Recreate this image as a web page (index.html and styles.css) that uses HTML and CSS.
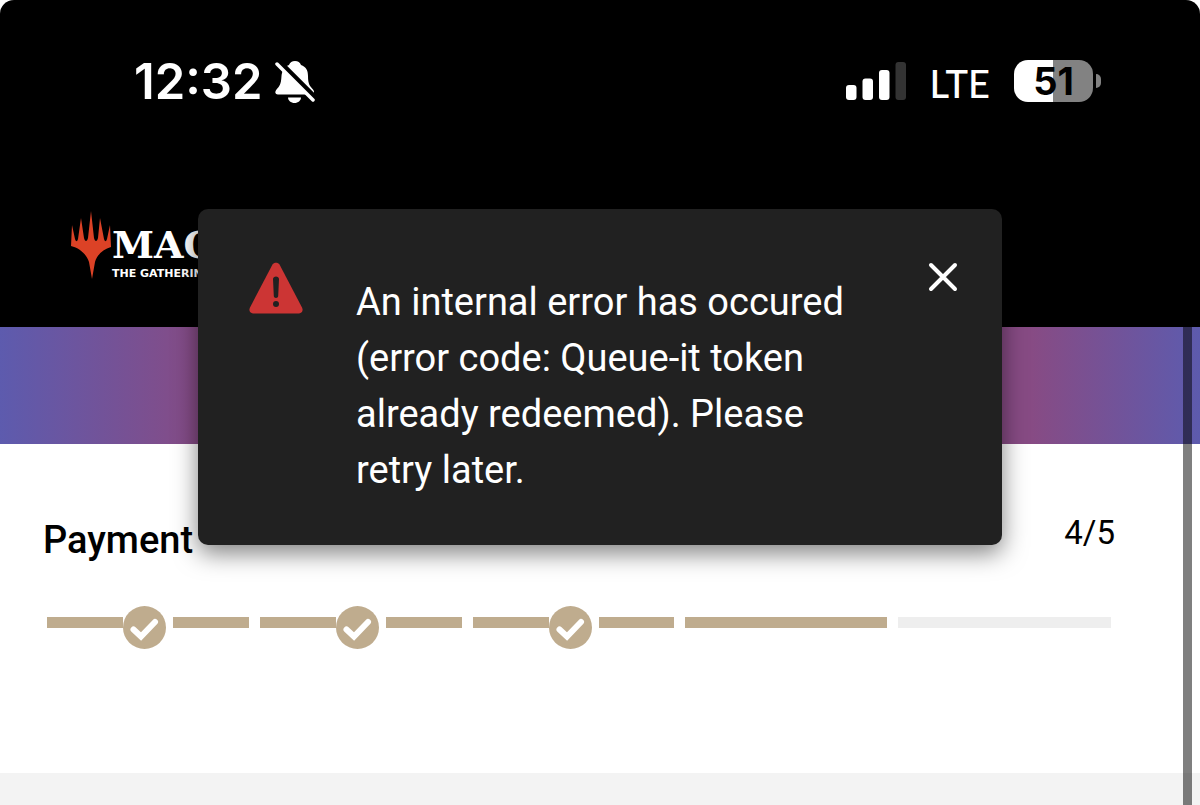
FILE: index.html
```
<!DOCTYPE html>
<html lang="en">
<head>
    <meta charset="UTF-8">
    <meta name="viewport" content="width=device-width, initial-scale=1.0">
    <title>Payment</title>
    <link rel="stylesheet" href="styles.css">
</head>
<body>
    <div class="top">
        <div class="status-bar">
            <div class="status-left">
                <span class="time">12:32</span>
                <svg class="bell" width="40" height="44" viewBox="0 0 40 44" aria-hidden="true">
                    <path fill="#fff" d="M20 1c-3 0-5 1.500-6 4C9 7 7 11 6.500 16c-.5 9-2 10-5 13.500C-.5 32 0 34.500 3 34.500h33c3 0 4-2.500 2-5-3-3.500-5-5-5-13.500 0-6-2-9-7-11C25 2.500 23 1 20 1z"/>
                    <path fill="#fff" d="M13 37.500h13c0 3-3 5.500-6.500 5.500S13 40.500 13 37.500z"/>
                    <path stroke="#000" stroke-width="6" d="M2 0l40 40"/>
                    <path stroke="#fff" stroke-width="3.500" stroke-linecap="round" d="M2 4l36 36"/>
                </svg>
            </div>
            <div class="status-right">
                <svg class="signal" width="60" height="38" viewBox="0 0 60 38" aria-hidden="true">
                    <rect x="0" y="23" width="10.500" height="15" rx="3" fill="#fff"/>
                    <rect x="16.500" y="16.500" width="10.500" height="21.500" rx="3" fill="#fff"/>
                    <rect x="33" y="8" width="10.500" height="30" rx="3" fill="#fff"/>
                    <rect x="49.500" y="0" width="10.500" height="38" rx="3" fill="#333"/>
                </svg>
                <span class="network">LTE</span>
                <div class="battery">
                    <span class="battery-level">51</span>
                    <span class="battery-tip"></span>
                </div>
            </div>
        </div>
        <header class="header">
            <a class="logo" href="#">
                <svg width="41" height="70" viewBox="0 0 41 70" aria-hidden="true">
                    <path fill="#dc4226" d="M2 15l3 14c1 3 2 3 3 0l3-21 3 20c1 4 3 4 4 0l3-27 3 27c1 4 3 4 4 0l2-20 4 21c1 3 2 3 3 0l3-14 1 22c-8 2-14 8-16 15l-3 17-3-17C17 45 10 38 1 36z"/>
                </svg>
                <span class="logo-text">
                    <span class="logo-name">MAGIC</span>
                    <span class="logo-sub">THE GATHERING</span>
                </span>
            </a>
        </header>
    </div>

    <main class="page">
        <div class="banner"></div>
        <section class="checkout">
            <div class="step-title">
                <h1>Payment</h1>
                <span class="step-count">4/5</span>
            </div>
            <ol class="progress">
                <li class="step">
                    <span class="bar"></span>
                    <svg class="check" viewBox="0 0 43 43"><circle cx="21.500" cy="21.500" r="21.500"/><path d="M10.500 23.500l7.500 7 14-14.500"/></svg>
                    <span class="bar"></span>
                </li>
                <li class="step">
                    <span class="bar"></span>
                    <svg class="check" viewBox="0 0 43 43"><circle cx="21.500" cy="21.500" r="21.500"/><path d="M10.500 23.500l7.500 7 14-14.500"/></svg>
                    <span class="bar"></span>
                </li>
                <li class="step">
                    <span class="bar"></span>
                    <svg class="check" viewBox="0 0 43 43"><circle cx="21.500" cy="21.500" r="21.500"/><path d="M10.500 23.500l7.500 7 14-14.500"/></svg>
                    <span class="bar"></span>
                </li>
                <li class="step"><span class="bar"></span></li>
                <li class="step"><span class="bar todo"></span></li>
            </ol>
        </section>
        <div class="scrollbar"></div>
    </main>

    <div class="alert" role="alert">
        <svg class="alert-icon" width="54" height="52" viewBox="0 0 54 52" aria-hidden="true">
            <path fill="#cc3534" d="M23.500 2.500c1.500-2.500 5.500-2.500 7 0l22.500 43c1.500 3 0 6-3 6H4c-3 0-4.500-3-3-6z"/>
            <path fill="#212121" d="M24 17c0-3.500 6-3.500 6 0l-.8 17c0 2.500-4.400 2.500-4.400 0z"/>
            <circle cx="27" cy="42" r="3" fill="#212121"/>
        </svg>
        <p class="alert-text">An internal error has occured (error code: Queue-it token already redeemed). Please retry later.</p>
        <button class="close" type="button" aria-label="Close">
            <svg width="30" height="30" viewBox="0 0 30 30"><path d="M3 3l24 24M27 3L3 27"/></svg>
        </button>
    </div>
</body>
</html>
```
FILE: styles.css
```
* {
    box-sizing: border-box;
}
body {
    margin: 0;
    min-height: 100vh;
    display: flex;
    flex-direction: column;
    position: relative;
    background: #fff;
    color: #000;
    font-family: Roboto, "Liberation Sans", sans-serif;
}
.top {
    background: #000;
    color: #fff;
    border-radius: 14px 14px 0 0;
}
.status-bar {
    display: flex;
    justify-content: space-between;
    align-items: center;
    height: 162px;
    padding: 0 99px 0 134px;
}
.status-left,
.status-right {
    display: flex;
    align-items: center;
}
.status-left {
    padding-top: 2px;
}
.time {
    font: 600 49px/60px Inter, sans-serif;
}
.bell {
    margin-left: 12px;
}
.network {
    margin: 4px 24px 0;
    font: 500 38px/48px "Liberation Sans Narrow", Lato, sans-serif;
}
.battery {
    display: flex;
    align-items: center;
    gap: 3px;
}
.battery-level {
    width: 79px;
    border-radius: 14px;
    background: linear-gradient(90deg, #fff 50%, #828282 50%);
    color: #000;
    text-align: center;
    font: 700 38px/42px Inter, sans-serif;
}
.battery-tip {
    width: 5px;
    height: 14px;
    border-radius: 0 7px 7px 0;
    background: #828282;
}
.header {
    height: 165px;
    padding: 48px 70px 0;
}
.logo {
    display: inline-flex;
    gap: 1px;
    color: #fff;
    text-decoration: none;
}
.logo-text {
    display: flex;
    flex-direction: column;
    padding-top: 12px;
}
.logo-name {
    font: bold 38px/46px "DejaVu Serif", serif;
}
.logo-sub {
    font: bold 11px/12px "DejaVu Sans", sans-serif;
}
.page {
    flex: 1;
    display: flex;
    flex-direction: column;
    position: relative;
    background: #f3f3f3;
}
.banner {
    height: 117px;
    background: linear-gradient(90deg, #5d5bae 0%, #874b84 17%, #874b84 86%, #5d5bae 100%);
}
.checkout {
    height: 329px;
    padding: 68px 85px 0 43px;
    background: #fff;
}
.step-title {
    display: flex;
    justify-content: space-between;
    align-items: flex-start;
}
h1 {
    margin: 4px 0 0;
    font-size: 38px;
    line-height: 48px;
    font-weight: 500;
}
.step-count {
    font-size: 33px;
    line-height: 42px;
    font-weight: 400;
}
.progress {
    display: grid;
    grid-template-columns: repeat(5, 1fr);
    margin: 42px 4px 0;
    padding: 0;
    list-style: none;
}
.step {
    display: flex;
    align-items: flex-start;
    padding-right: 11px;
}
.step:last-child {
    padding-right: 0;
}
.bar {
    flex: 1;
    height: 11px;
    margin-top: 11px;
    background: #bfac8e;
}
.todo {
    background: #eee;
}
.check {
    width: 43px;
    height: 43px;
    margin-right: 7px;
    fill: #bfac8e;
}
.check path {
    fill: none;
    stroke: #fff;
    stroke-width: 6;
    stroke-linecap: round;
}
.scrollbar {
    position: absolute;
    top: 0;
    right: 8px;
    bottom: 0;
    width: 9px;
    background: rgba(0, 0, 0, 0.5);
}
.alert {
    position: absolute;
    top: 209px;
    left: 50%;
    width: 67%;
    transform: translateX(-50%);
    display: flex;
    align-items: flex-start;
    padding: 53px 44px 47px 51px;
    border-radius: 10px;
    background: #212121;
    color: #fff;
    box-shadow: 0 8px 24px rgba(0, 0, 0, 0.5);
}
.alert-icon {
    flex: none;
}
.alert-text {
    flex: 1;
    margin: 12px 64px 0 53px;
    font-size: 38px;
    line-height: 56px;
    font-weight: 400;
}
.close {
    padding: 0;
    border: 0;
    background: none;
    cursor: pointer;
}
.close svg {
    display: block;
    stroke: #fff;
    stroke-width: 4;
    stroke-linecap: round;
}
```
